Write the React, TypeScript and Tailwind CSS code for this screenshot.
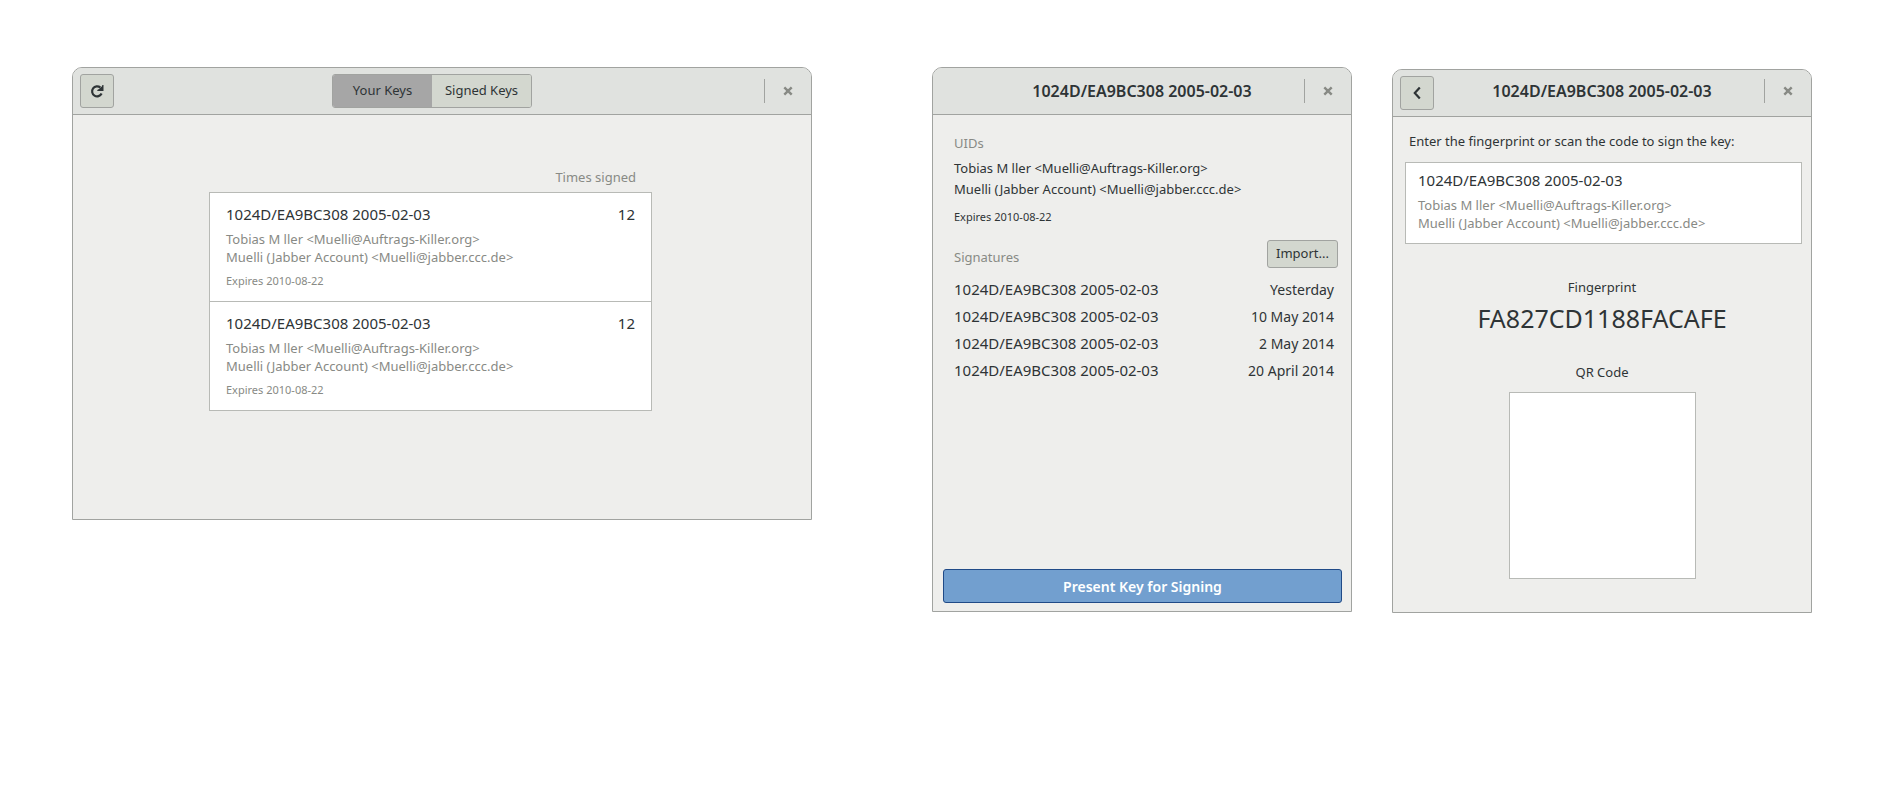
import { type ReactNode } from "react";
import { clsx } from "clsx";

const KEY_ID = "1024D/EA9BC308 2005-02-03";
const UIDS = [
  "Tobias M ller <Muelli@Auftrags-Killer.org>",
  "Muelli (Jabber Account) <Muelli@jabber.ccc.de>",
];
const EXPIRES = "Expires 2010-08-22";

const keys = [
  { id: KEY_ID, uids: UIDS, expires: EXPIRES, timesSigned: 12 },
  { id: KEY_ID, uids: UIDS, expires: EXPIRES, timesSigned: 12 },
];

const signatures = [
  { id: KEY_ID, date: "Yesterday" },
  { id: KEY_ID, date: "10 May 2014" },
  { id: KEY_ID, date: "2 May 2014" },
  { id: KEY_ID, date: "20 April 2014" },
];

// ============================================================================
// Icons
// ============================================================================

function RefreshIcon() {
  return (
    <svg viewBox="0 0 16 16" className="size-4" aria-hidden="true">
      <path d="M12.6 10.6A5 5 0 1 1 11.4 4.6" fill="none" stroke="#2e3436" strokeWidth="2.2" />
      <path d="M14.5 2V8H8.3V6.9L10.8 5.6L13.2 2.9V2Z" fill="#2e3436" />
    </svg>
  );
}

function BackIcon() {
  return (
    <svg viewBox="0 0 16 16" className="size-4" aria-hidden="true">
      <path d="M10.8 2.6L5.8 8L10.8 13.4" fill="none" stroke="#2e3436" strokeWidth="2.2" />
    </svg>
  );
}

function CloseIcon() {
  return (
    <svg viewBox="0 0 10 10" className="size-[10px]" aria-hidden="true">
      <path d="M1.3 1.3L8.7 8.7M8.7 1.3L1.3 8.7" stroke="#888a85" strokeWidth="2.4" />
    </svg>
  );
}

// ============================================================================
// Window parts
// ============================================================================

interface WindowProps {
  label: string;
  className?: string;
  start?: ReactNode;
  title: ReactNode;
  /** Extra classes for the title and the window controls */
  barClassName?: string;
  children: ReactNode;
}

function Window({ label, className, start, title, barClassName, children }: WindowProps) {
  return (
    <section
      aria-label={label}
      className={clsx(
        "flex min-w-0 flex-col overflow-hidden rounded-t-[10px] border border-[#a1a3a0] bg-[#eeeeec]",
        className,
      )}
    >
      <header className="grid h-[47px] shrink-0 grid-cols-[1fr_auto_1fr] items-center border-b border-[#a1a3a0] bg-[#e0e2df] px-[7px]">
        <div className="flex">{start}</div>
        <div className={barClassName}>{title}</div>
        <div className={clsx("flex items-center justify-end gap-[7px]", barClassName)}>
          <span className="h-6 w-px bg-[#a1a3a0]" />
          <button type="button" aria-label="Close" className="flex size-8 items-center justify-center">
            <CloseIcon />
          </button>
        </div>
      </header>
      {children}
    </section>
  );
}

function IconButton({ label, children }: { label: string; children: ReactNode }) {
  return (
    <button
      type="button"
      aria-label={label}
      className="flex size-[34px] items-center justify-center rounded-[3px] border border-[#a1a3a0] bg-[#d3d7cf]"
    >
      {children}
    </button>
  );
}

function WindowTitle({ children }: { children: ReactNode }) {
  return <h1 className="text-[16px] leading-5 font-semibold whitespace-nowrap">{children}</h1>;
}

function UidList({ uids }: { uids: string[] }) {
  return (
    <div className="mt-1.5 text-[13px] leading-[18px] text-[#888a85]">
      {uids.map((uid) => (
        <p key={uid}>{uid}</p>
      ))}
    </div>
  );
}

// ============================================================================
// Windows
// ============================================================================

function KeysWindow() {
  return (
    <Window
      label="Keys"
      start={
        <IconButton label="Refresh">
          <RefreshIcon />
        </IconButton>
      }
      title={
        <div className="mr-5 flex h-[34px] w-[200px] overflow-hidden rounded-[3px] border border-[#a1a3a0] text-[13px]">
          <button type="button" aria-pressed="true" className="flex-1 bg-[#a6a6a6]">
            Your Keys
          </button>
          <button type="button" aria-pressed="false" className="flex-1 bg-[#d3d7cf]">
            Signed Keys
          </button>
        </div>
      }
    >
      <div className="pt-[53px] pr-[159px] pb-[108px] pl-[136px]">
        <p className="pr-4 text-right text-[13px] leading-[18px] text-[#888a85]">Times signed</p>
        <ul className="mt-1.5 divide-y divide-[#b8bab6] border border-[#b8bab6] bg-white">
          {keys.map((key, i) => (
            <li key={i} className="px-4 pt-[11px] pb-3">
              <div className="flex justify-between text-[15px] leading-5">
                <h2>{key.id}</h2>
                <span>{key.timesSigned}</span>
              </div>
              <UidList uids={key.uids} />
              <p className="mt-[7px] text-[11px] leading-4 text-[#888a85]">{key.expires}</p>
            </li>
          ))}
        </ul>
      </div>
    </Window>
  );
}

function KeyDetailsWindow() {
  return (
    <Window label="Key details" className="col-start-3 min-h-[545px]" title={<WindowTitle>{KEY_ID}</WindowTitle>}>
      <div className="flex flex-1 flex-col pt-[19px] pb-2">
        <div className="pr-[13px] pl-[21px]">
          <h2 className="text-[13px] leading-[18px] text-[#888a85]">UIDs</h2>
          <div className="mt-1.5 text-[13px] leading-[21px]">
            {UIDS.map((uid) => (
              <p key={uid}>{uid}</p>
            ))}
          </div>
          <p className="mt-[9px] text-[11px] leading-4">{EXPIRES}</p>

          <div className="mt-[15px] flex items-end justify-between">
            <h2 className="pb-0.5 text-[13px] leading-[18px] text-[#888a85]">Signatures</h2>
            <button
              type="button"
              className="h-7 w-[71px] rounded-[3px] border border-[#a1a3a0] bg-[#d3d7cf] text-[13px]"
            >
              Import...
            </button>
          </div>
        </div>

        <div className="mt-2 pr-[17px] pl-[21px]">
          <table className="w-full leading-[27px]">
            <tbody>
              {signatures.map((signature) => (
                <tr key={signature.date}>
                  <td className="p-0 text-[15px]">{signature.id}</td>
                  <td className="p-0 text-right text-[14px]">{signature.date}</td>
                </tr>
              ))}
            </tbody>
          </table>
        </div>

        <div className="mt-auto pr-[9px] pl-2.5">
          <button
            type="button"
            className="h-[34px] w-full rounded-[3px] border border-[#204a87] bg-[#729fcf] text-[14px] font-semibold text-white"
          >
            Present Key for Signing
          </button>
        </div>
      </div>
    </Window>
  );
}

function SignKeyWindow() {
  return (
    <Window
      label="Sign key"
      className="col-start-5 mt-0.5"
      barClassName="pb-1"
      start={
        <IconButton label="Back">
          <BackIcon />
        </IconButton>
      }
      title={<WindowTitle>{KEY_ID}</WindowTitle>}
    >
      <div className="pt-[15px] pr-[9px] pl-3">
        <p className="pl-1 text-[13px] leading-[18px]">Enter the fingerprint or scan the code to sign the key:</p>
        <div className="mt-3 border border-[#b8bab6] bg-white px-3 pt-[7px] pb-[11px]">
          <h2 className="text-[15px] leading-5">{KEY_ID}</h2>
          <UidList uids={UIDS} />
        </div>
      </div>

      <div className="pt-[34px] pb-[33px] text-center">
        <h2 className="text-[13px] leading-[18px]">Fingerprint</h2>
        <p className="mt-1.5 text-[25px] leading-8">FA827CD1188FACAFE</p>
        <h2 className="mt-[29px] text-[13px] leading-[18px]">QR Code</h2>
        <div className="mx-auto mt-[11px] size-[187px] border border-[#b8bab6] bg-white" />
      </div>
    </Window>
  );
}

export default function App() {
  return (
    <main className="grid min-h-screen grid-cols-[37fr_120px_21fr_40px_21fr] content-start items-start bg-white pt-[67px] pr-[88px] pb-10 pl-[72px] font-['Noto_Sans','Open_Sans',sans-serif] text-[#2e3436]">
      <KeysWindow />
      <KeyDetailsWindow />
      <SignKeyWindow />
    </main>
  );
}
